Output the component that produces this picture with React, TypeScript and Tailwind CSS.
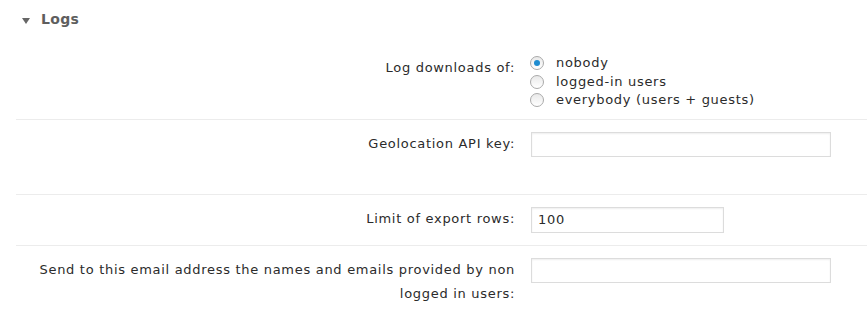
import React from "react";

function Radio({ checked, label }: { checked?: boolean; label: string }) {
  return (
    <label className="flex items-center h-[18.5px] leading-[18px]">
      <span className="relative w-[14px] h-[14px] rounded-full border border-[#aaaaaa] bg-gradient-to-b from-[#e9e9e9] to-white shrink-0 ml-[-1px]">
        {checked && (
          <span className="absolute left-1/2 top-1/2 w-[6px] h-[6px] -translate-x-1/2 -translate-y-1/2 rounded-full bg-[#1e8cd0]" />
        )}
      </span>
      <span className="ml-[12px] text-[#2b2b2b]">{label}</span>
    </label>
  );
}

export default function App() {
  return (
    <div className="w-[867px] h-[323px] bg-white pl-4 font-['DejaVu_Sans','Verdana',sans-serif] text-[13px] tracking-[0.7px] text-[#2b2b2b] overflow-hidden">
      <div className="h-[44px] flex items-center pl-[6px] pb-[5px]">
        <svg width="8" height="6" viewBox="0 0 8 6" className="mt-[3px]">
          <polygon points="0,0 8,0 4,6" fill="#666" />
        </svg>
        <span className="ml-[11px] font-bold text-[14px] tracking-[0.3px] text-[#5e5e5e]">Logs</span>
      </div>

      <div className="flex border-b border-[#ececec] pt-[10px] pb-[9px]">
        <div className="w-[499px] text-right leading-[24px] pt-[2px]">Log downloads of:</div>
        <div className="ml-4 flex flex-col">
          <Radio checked label="nobody" />
          <Radio label="logged-in users" />
          <Radio label="everybody (users + guests)" />
        </div>
      </div>

      <div className="flex border-b border-[#ececec] pt-[12px] h-[75px]">
        <div className="w-[499px] text-right leading-[24px]">Geolocation API key:</div>
        <div className="ml-4">
          <input className="w-[300px] h-[25px] border border-[#dcdcdc] shadow-[inset_0_1px_2px_rgba(0,0,0,0.07)] px-[6px] outline-none" />
        </div>
      </div>

      <div className="flex border-b border-[#ececec] pt-[12px] h-[51px]">
        <div className="w-[499px] text-right leading-[24px]">Limit of export rows:</div>
        <div className="ml-4">
          <input
            defaultValue="100"
            className="w-[193px] h-[26px] border border-[#dcdcdc] shadow-[inset_0_1px_2px_rgba(0,0,0,0.07)] px-[6px] outline-none text-[#2b2b2b] tracking-[0.7px]"
          />
        </div>
      </div>

      <div className="flex pt-[12px]">
        <div className="w-[499px] text-right leading-[24px] pl-[20px]">
          Send to this email address the names and emails provided by non logged in users:
        </div>
        <div className="ml-4">
          <input className="w-[300px] h-[25px] border border-[#dcdcdc] shadow-[inset_0_1px_2px_rgba(0,0,0,0.07)] px-[6px] outline-none" />
        </div>
      </div>
    </div>
  );
}
